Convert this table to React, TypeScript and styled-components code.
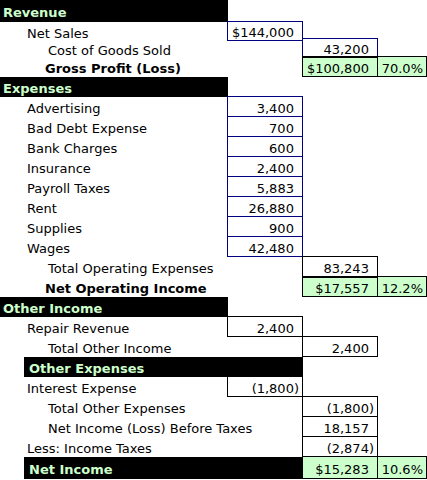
import styled, { createGlobalStyle } from 'styled-components';

const GlobalStyle = createGlobalStyle`
  html, body {
    margin: 0;
    padding: 0;
    background: #ffffff;
  }
  body {
    font-family: "DejaVu Sans", Verdana, sans-serif;
    font-size: 13px;
    color: #000000;
  }
`;

const NAVY = '#000080';
const BLACK = '#000000';
const GREEN = '#ccffcc';

const Sheet = styled.div`
  width: 427px;
  height: 480px;
  overflow: hidden;
  display: flex;
  flex-direction: column;
`;

const Row = styled.div<{ $h: number }>`
  display: grid;
  grid-template-columns: 24px 204px 75px 75px 49px;
  height: ${(p) => p.$h}px;
  flex-shrink: 0;
`;

const HeaderBar = styled.div<{ $start: number; $end: number }>`
  grid-column: ${(p) => p.$start} / ${(p) => p.$end};
  background: #000000;
  color: ${GREEN};
  font-weight: bold;
  display: flex;
  align-items: center;
  padding: 3px 0 0 ${(p) => (p.$start === 1 ? 3 : 5)}px;
  white-space: nowrap;
`;

const Label = styled.div<{ $indent: number; $bold?: boolean }>`
  grid-column: 2 / 3;
  display: flex;
  align-items: center;
  padding: 3px 0 0 ${(p) => p.$indent}px;
  font-weight: ${(p) => (p.$bold ? 'bold' : 'normal')};
  white-space: nowrap;
  overflow: visible;
`;

const Cell = styled.div<{ $col: number; $line: string; $fill?: boolean; $thick?: boolean }>`
  grid-column: ${(p) => p.$col} / ${(p) => p.$col + 1};
  border: 1px solid ${(p) => p.$line};
  border-top-width: ${(p) => (p.$thick ? 2 : 1)}px;
  border-top-color: ${(p) => (p.$thick ? BLACK : p.$line)};
  margin: -1px 0 0 -1px;
  background: ${(p) => (p.$fill ? GREEN : '#ffffff')};
  display: flex;
  align-items: center;
  justify-content: flex-end;
  padding: 3px 3px 0 0;
  white-space: nowrap;
`;

const Paren = styled.span`
  visibility: hidden;
`;

type Val = { text: string; line: string; fill?: boolean; thick?: boolean };

type Line = {
  h: number;
  label: string;
  kind: 'header' | 'item' | 'total';
  indent?: number;
  span?: [number, number];
  b?: Val;
  c?: Val;
  d?: Val;
};

const nv = (text: string): Val => ({ text, line: NAVY });
const bk = (text: string): Val => ({ text, line: BLACK });
const gr = (text: string, thick = true): Val => ({ text, line: BLACK, fill: true, thick });

const lines: Line[] = [
  { h: 22, label: 'Revenue', kind: 'header', span: [1, 3] },
  { h: 17, label: 'Net Sales', kind: 'item', indent: 3, b: nv('$144,000') },
  { h: 18, label: 'Cost of Goods Sold', kind: 'item', indent: 24, c: nv('43,200') },
  { h: 20, label: 'Gross Profit (Loss)', kind: 'total', indent: 21, c: gr('$100,800'), d: gr('70.0%', false) },
  { h: 20, label: 'Expenses', kind: 'header', span: [1, 3] },
  { h: 20, label: 'Advertising', kind: 'item', indent: 3, b: nv('3,400') },
  { h: 20, label: 'Bad Debt Expense', kind: 'item', indent: 3, b: nv('700') },
  { h: 20, label: 'Bank Charges', kind: 'item', indent: 3, b: nv('600') },
  { h: 20, label: 'Insurance', kind: 'item', indent: 3, b: nv('2,400') },
  { h: 20, label: 'Payroll Taxes', kind: 'item', indent: 3, b: nv('5,883') },
  { h: 20, label: 'Rent', kind: 'item', indent: 3, b: nv('26,880') },
  { h: 20, label: 'Supplies', kind: 'item', indent: 3, b: nv('900') },
  { h: 20, label: 'Wages', kind: 'item', indent: 3, b: nv('42,480') },
  { h: 20, label: 'Total Operating Expenses', kind: 'item', indent: 24, c: bk('83,243') },
  { h: 20, label: 'Net Operating Income', kind: 'total', indent: 21, c: gr('$17,557'), d: gr('12.2%', false) },
  { h: 20, label: 'Other Income', kind: 'header', span: [1, 3] },
  { h: 20, label: 'Repair Revenue', kind: 'item', indent: 3, b: bk('2,400') },
  { h: 20, label: 'Total Other Income', kind: 'item', indent: 24, c: bk('2,400') },
  { h: 20, label: 'Other Expenses', kind: 'header', span: [2, 4] },
  { h: 20, label: 'Interest Expense', kind: 'item', indent: 3, b: bk('(1,800)') },
  { h: 20, label: 'Total Other Expenses', kind: 'item', indent: 24, c: bk('(1,800)') },
  { h: 20, label: 'Net Income (Loss) Before Taxes', kind: 'item', indent: 24, c: bk('18,157') },
  { h: 20, label: 'Less: Income Taxes', kind: 'item', indent: 3, c: bk('(2,874)') },
  { h: 22, label: 'Net Income', kind: 'header', span: [2, 4], c: gr('$15,283', false), d: gr('10.6%', false) },
];

function Value({ col, v }: { col: number; v: Val }) {
  // accounting format: positives leave room for a closing paren, percents don't
  const pad = !v.text.endsWith(')') && !v.text.endsWith('%');
  return (
    <Cell $col={col} $line={v.line} $fill={v.fill} $thick={v.thick}>
      {v.text}
      {pad && <Paren>)</Paren>}
    </Cell>
  );
}

export default function App() {
  return (
    <>
      <GlobalStyle />
      <Sheet>
        {lines.map((l) => (
          <Row key={l.label} $h={l.h}>
            {l.kind === 'header' && l.span ? (
              <HeaderBar $start={l.span[0]} $end={l.span[1]}>
                {l.label}
              </HeaderBar>
            ) : (
              <Label $indent={l.indent ?? 3} $bold={l.kind === 'total'}>
                {l.label}
              </Label>
            )}
            {l.b && <Value col={3} v={l.b} />}
            {l.c && <Value col={4} v={l.c} />}
            {l.d && <Value col={5} v={l.d} />}
          </Row>
        ))}
      </Sheet>
    </>
  );
}
